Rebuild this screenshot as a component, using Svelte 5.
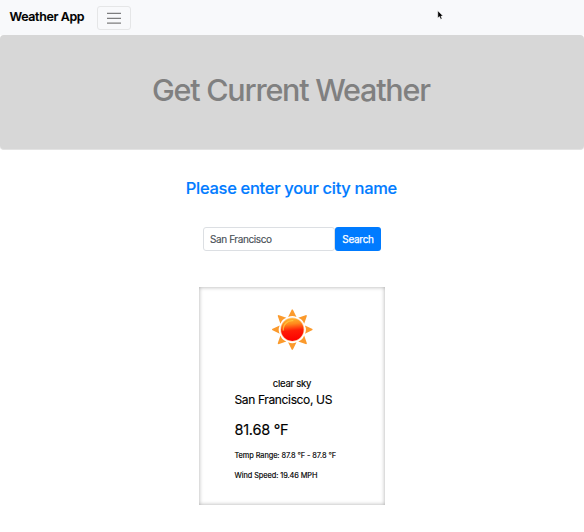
<script>
  let city = $state('San Francisco');
  const rays = [0, 45, 90, 135, 180, 225, 270, 315];
</script>

<div class="app">
  <nav>
    <span class="brand">Weather App</span>
    <button class="toggler" aria-label="Toggle navigation">
      <svg width="18" height="18" viewBox="0 0 18 18">
        <path d="M2 4.3h14M2 9.3h14M2 14.2h14" stroke="#7d7e7f" stroke-width="1.3" />
      </svg>
    </button>
  </nav>

  <header><h1>Get Current Weather</h1></header>

  <h2>Please enter your city name</h2>

  <form onsubmit={(e) => e.preventDefault()}>
    <input type="text" bind:value={city} aria-label="City" />
    <button class="search">Search</button>
  </form>

  <section class="card">
    <svg class="sun" width="44" height="44" viewBox="-22 -22 44 44">
      <defs>
        <linearGradient id="disc" x1="0.4" y1="0" x2="0.5" y2="1">
          <stop offset="0" stop-color="#ffb52e" />
          <stop offset="0.25" stop-color="#ff8a1c" />
          <stop offset="0.55" stop-color="#ff1c06" />
          <stop offset="1" stop-color="#fb0000" />
        </linearGradient>
      </defs>
      {#each rays as angle}
        <path d="M-4.2 -12.6 Q0 -14.6 4.2 -12.6 L0.5 -20.2 H-0.5 Z" fill="#fb9a2c" transform="translate(0.3 -0.4) rotate({angle})" />
      {/each}
      <g transform="translate(0.3 -0.4)">
        <circle r="12" fill="#ffd0a0" />
        <circle r="11.3" fill="url(#disc)" />
        <path d="M-9 1 A9 9 0 0 1 1 -9" fill="none" stroke="#ffcf45" stroke-width="1.3" opacity="0.7" />
      </g>
    </svg>
    <div class="sky">clear sky</div>
    <div class="details">
      <div class="place">San Francisco, US</div>
      <div class="temp">81.68 °F</div>
      <div class="small">Temp Range: 87.8 °F - 87.8 °F</div>
      <div class="small wind">Wind Speed: 19.46 MPH</div>
    </div>
  </section>

  <svg class="cursor" width="7" height="11" viewBox="0 0 7 11">
    <path d="M0.8 0.8V8L2.5 6.6L3.7 9.3L5 8.7L3.9 6.1H6Z" fill="#000" stroke="#fff" stroke-width="0.5" />
  </svg>
</div>

<style>
  :global(body) {
    background: #fff;
  }
  .app {
    position: relative;
    height: 532px;
    overflow: hidden;
    font-family: Inter, 'Liberation Sans', sans-serif;
    color: #000;
    -webkit-text-stroke: 0.15px currentColor;
    white-space: nowrap;
    display: flex;
    flex-direction: column;
    align-items: center;
  }
  nav {
    align-self: stretch;
    box-sizing: border-box;
    height: 35px;
    padding-left: 9.6px;
    background: #f8f9fb;
    display: flex;
    align-items: center;
  }
  .brand {
    width: 87.4px;
    font-size: 12.4px;
    font-weight: 600;
    line-height: 16px;
    letter-spacing: -0.35px;
    margin-top: -1px;
  }
  .toggler {
    box-sizing: border-box;
    width: 34px;
    height: 24px;
    padding: 0;
    margin-top: 1px;
    border: 1px solid #e5e6e7;
    border-radius: 3px;
    background: transparent;
    display: flex;
    align-items: center;
    justify-content: center;
  }
  header {
    align-self: stretch;
    box-sizing: border-box;
    height: 115px;
    padding: 36px 2.4px 0 0;
    background: #d7d7d7;
    border-bottom: 1px solid #e3e3e3;
    border-radius: 4px;
    text-align: center;
  }
  h1 {
    margin: 0;
    font-size: 30.5px;
    line-height: 37px;
    font-weight: 500;
    letter-spacing: -1.23px;
    color: #808080;
    -webkit-text-stroke: 0;
  }
  h2 {
    margin: 27px 0 0;
    padding-right: 1.2px;
    font-size: 16.5px;
    line-height: 23px;
    font-weight: 500;
    letter-spacing: -0.31px;
    color: #007bff;
  }
  form {
    margin: 27px 0 0;
    display: flex;
  }
  input {
    box-sizing: border-box;
    width: 132px;
    height: 24px;
    padding: 0 6px;
    border: 1px solid #dcdfe3;
    border-radius: 3px;
    font: 10px Inter, 'Liberation Sans', sans-serif;
    letter-spacing: -0.4px;
    color: #495057;
    outline: none;
    -webkit-text-stroke: 0.15px currentColor;
  }
  .search {
    width: 46px;
    height: 24px;
    padding: 0;
    border: 0;
    border-radius: 3px;
    background: #007bff;
    color: #fff;
    font: 10px Inter, 'Liberation Sans', sans-serif;
    letter-spacing: -0.3px;
    -webkit-text-stroke: 0.25px currentColor;
  }
  .card {
    box-sizing: border-box;
    width: 186px;
    height: 218px;
    margin-top: 35.5px;
    padding-top: 21.5px;
    box-shadow: inset 0 0 4px #aaa;
    display: flex;
    flex-direction: column;
    align-items: center;
  }
  .sun {
    display: block;
    flex: none;
  }
  .sky {
    margin-top: 26px;
    font-size: 9.6px;
    line-height: 12px;
    letter-spacing: -0.28px;
  }
  .details {
    align-self: stretch;
    padding-left: 35.5px;
  }
  .place {
    margin-top: 2px;
    font-size: 12px;
    line-height: 16px;
    letter-spacing: -0.36px;
  }
  .temp {
    margin-top: 12px;
    font-size: 14.5px;
    line-height: 20px;
    letter-spacing: -0.26px;
  }
  .small {
    margin-top: 11px;
    font-size: 7.4px;
    line-height: 10px;
    letter-spacing: -0.08px;
  }
  .wind {
    margin-top: 10px;
  }
  .cursor {
    position: absolute;
    left: 437px;
    top: 10px;
  }
</style>
